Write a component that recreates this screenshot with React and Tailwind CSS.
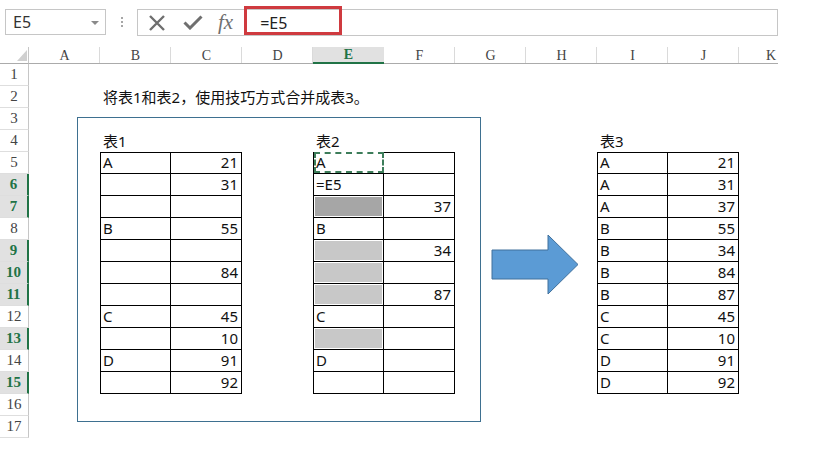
import React from 'react'

/* ── sheet data ─────────────────────────────────────────────── */
const COLS = ['A', 'B', 'C', 'D', 'E', 'F', 'G', 'H', 'I', 'J', 'K']
const HL_ROWS = [6, 7, 9, 10, 11, 13, 15]
const ROWS = Array.from({ length: 17 }, (_, i) => i + 1)

const T1 = [
  ['A', '21'], ['', '31'], ['', ''], ['B', '55'], ['', ''], ['', '84'],
  ['', ''], ['C', '45'], ['', '10'], ['D', '91'], ['', '92'],
]
const T2 = [
  ['A', ''], ['=E5', ''], ['', '37', 'dark'], ['B', ''], ['', '34', 'light'],
  ['', '', 'light'], ['', '87', 'light'], ['C', ''], ['', '', 'light'], ['D', ''], ['', ''],
]
const T3 = [
  ['A', '21'], ['A', '31'], ['A', '37'], ['B', '55'], ['B', '34'], ['B', '84'],
  ['B', '87'], ['C', '45'], ['C', '10'], ['D', '91'], ['D', '92'],
]
const TABLES = [
  { col: 1, label: '表1', rows: T1 },
  { col: 4, label: '表2', rows: T2 },
  { col: 8, label: '表3', rows: T3 },
]

const cellFont = "font-['Noto_Sans','Noto_Sans_CJK_SC',sans-serif]"
const headFont = "font-['Liberation_Serif','DejaVu_Serif',serif]"

/* ── formula bar icons ──────────────────────────────────────── */
const CancelIcon = () => (
  <svg width="18" height="16" viewBox="0 0 18 16">
    <path d="M2 1 L16 15 M16 1 L2 15" stroke="#6f6f6f" strokeWidth="2.4" fill="none" />
  </svg>
)
const CheckIcon = () => (
  <svg width="20" height="15" viewBox="0 0 20 15">
    <path d="M1.5 7.5 L7 13 L18.5 1.5" stroke="#6f6f6f" strokeWidth="3" fill="none" />
  </svg>
)

function TableCell({ r, c }) {
  const t = TABLES.find(t => c === t.col || c === t.col + 1)
  if (!t) return null
  const first = c === t.col
  const row = t.rows[r - 5]
  const val = first ? row[0] : row[1]
  const fill = first ? row[2] : null
  const isSel = t.col === 4 && first && r === 5
  return (
    <div className={`relative h-[22px] border-black border-r border-b ${first ? 'border-l' : ''} ${r === 5 ? 'border-t' : ''} flex items-end ${first ? 'justify-start pl-[2px]' : 'justify-end pr-[3px]'} pb-[2px]`}>
      {fill && (
        <div className={`absolute inset-[1px] ${fill === 'dark' ? 'bg-[#a6a6a6]' : 'bg-[#c8c8c8]'}`} />
      )}
      {isSel && (
        <div className="absolute left-[-0.5px] top-[-1px] right-[-1px] bottom-0 border-2 border-dashed border-[#3d7d5a] bg-white" />
      )}
      <span className="relative text-[15px] leading-[18px] text-[#111]">{val}</span>
    </div>
  )
}

function SheetCell({ r, c }) {
  if (r >= 5 && r <= 15 && TABLES.some(t => c === t.col || c === t.col + 1)) {
    return <TableCell r={r} c={c} />
  }
  let content = null
  if (r === 2 && c === 1) content = '将表1和表2，使用技巧方式合并成表3。'
  if (r === 4) {
    const t = TABLES.find(t => t.col === c)
    if (t) content = t.label
  }
  return (
    <div className="relative h-[22px] flex items-end pb-[2px] pl-[3px]">
      {content && (
        <span className="whitespace-nowrap text-[15px] leading-[18px] text-[#111] relative z-10">{content}</span>
      )}
    </div>
  )
}

export default function App() {
  return (
    <div className={`relative w-[819px] h-[460px] overflow-hidden bg-white ${cellFont}`}>
      {/* ── Formula bar ─────────────────────────────────── */}
      <div className="h-[47px] flex items-start pt-[9px] pl-[5px]">
        <div className="relative w-[101px] h-[26px] border border-[#c6c6c6] flex items-center pl-[7px] text-[16px] text-[#333]">
          E5
          <span className="absolute right-[6px] top-[11px] w-0 h-0 border-l-[4px] border-r-[4px] border-t-[4px] border-l-transparent border-r-transparent border-t-[#8a8a8a]" />
        </div>
        <div className="w-[31px] h-[26px] flex flex-col items-center justify-center gap-[2px]">
          <span className="w-[2px] h-[2px] bg-[#a6a6a6]" />
          <span className="w-[2px] h-[2px] bg-[#a6a6a6]" />
          <span className="w-[2px] h-[2px] bg-[#a6a6a6]" />
        </div>
        <div className="relative w-[641px] h-[27px] border border-[#c6c6c6] flex items-center">
          <div className="ml-[10px] flex items-center">
            <CancelIcon />
          </div>
          <div className="ml-[17px] flex items-center">
            <CheckIcon />
          </div>
          <span className="ml-[15px] italic text-[21px] leading-none text-[#707070] font-['Liberation_Serif',serif] -mt-[1px]">fx</span>
          <span className="ml-[27px] text-[16px] text-[#222]">=E5</span>
          <div className="absolute left-[106px] top-[-4px] w-[98px] h-[29px] border-[3px] border-[#cf3a3f]" />
        </div>
      </div>

      {/* ── Sheet grid (K column is cut by the window edge) ── */}
      <div className="grid grid-cols-[29px_repeat(10,71px)_39px] grid-rows-[17px_repeat(17,22px)] w-[778px]">
        {/* header row */}
        <div className="relative border-b border-[#ababab] border-r border-r-[#c6c6c6]">
          <svg className="absolute left-[17px] top-[3px]" width="10" height="11" viewBox="0 0 10 11">
            <polygon points="10,0 10,11 0,11" fill="#d0d0d0" />
          </svg>
        </div>
        {COLS.map(col => (
          <div
            key={col}
            className={`flex items-center text-[14px] ${headFont} ${
              col === 'K' ? 'justify-end pr-[2px]' : 'justify-center'
            } ${
              col === 'E'
                ? 'bg-[#e1e1e1] border-b-2 border-[#217346] text-[#217346] font-bold'
                : `border-b border-[#ababab] text-[#444] ${col === 'K' ? '' : 'shadow-[inset_-1px_0_0_#dadada]'}`
            }`}
          >
            {col}
          </div>
        ))}

        {/* body rows */}
        {ROWS.map(r => {
          const hl = HL_ROWS.includes(r)
          return (
            <React.Fragment key={r}>
              <div
                className={`flex items-center justify-center border-b border-[#dedede] text-[15px] ${headFont} ${
                  hl
                    ? 'bg-[#e1e1e1] border-r-2 border-r-[#217346] text-[#217346] font-bold'
                    : 'border-r border-r-[#c6c6c6] text-[#444]'
                }`}
              >
                {r}
              </div>
              {COLS.map((col, c) => (
                <SheetCell key={col} r={r} c={c} />
              ))}
            </React.Fragment>
          )
        })}
      </div>

      {/* ── Frame shape around 表1 / 表2 ──────────────────── */}
      <div className="absolute left-[77px] top-[117px] w-[404px] h-[305px] border-[1.5px] border-[#3e7090] pointer-events-none" />

      {/* ── Block arrow ─────────────────────────────────── */}
      <svg className="absolute left-[491px] top-[234px]" width="90" height="62" viewBox="0 0 90 62">
        <polygon
          points="1,16 57,16 57,1 87,30.5 57,60 57,45 1,45"
          fill="#5b9bd5"
          stroke="#41719c"
          strokeWidth="1"
        />
      </svg>
    </div>
  )
}
